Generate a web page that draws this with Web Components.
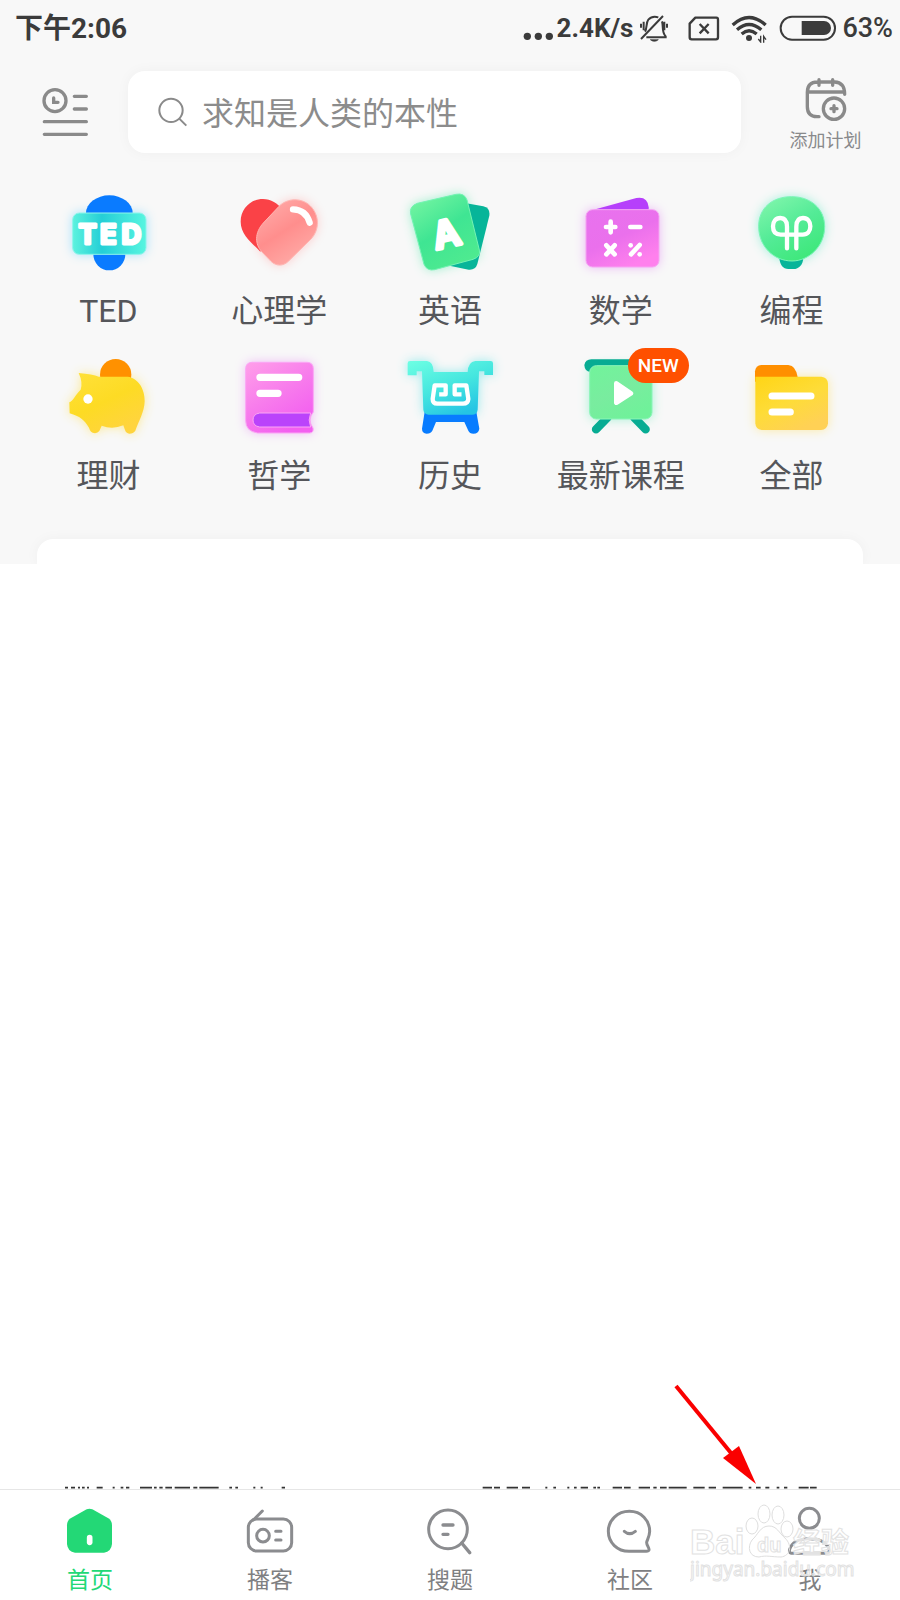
<!DOCTYPE html>
<html lang="zh-CN">
<head>
<meta charset="utf-8">
<meta name="viewport" content="width=device-width, initial-scale=1">
<title>首页</title>
<style>
html,body{margin:0;background:#fff}
body{font-family:Roboto,"Noto Sans CJK SC",sans-serif;color:#55565a}
</style>
</head>
<body>
<home-page></home-page>
<script>
const define = (name, html, setup) => {
  const t = document.createElement('template');
  t.innerHTML = '<style>*{box-sizing:border-box}svg{display:block;flex:none}button{font:inherit;color:inherit;background:none;border:0;padding:0;cursor:pointer}a{color:inherit;text-decoration:none}</style>' + html;
  customElements.define(name, class extends HTMLElement {
    constructor() {
      super();
      this.attachShadow({ mode: 'open' }).append(t.content.cloneNode(true));
    }
    connectedCallback() { if (setup) setup(this, this.shadowRoot); }
  });
};

/* Icon art for the course categories; each entry is [viewBox, markup]. */
const ART = {
ted: ['26 8 300 300', `
  <rect x="69" y="97" width="222" height="125" rx="20" fill="#4fc8ff" filter="url(#s)"/>
  <path d="M110 98A70 53 0 0 1 250 98V110H110Z" fill="#0a7bff"/><path d="M132 215H228V222A48 48 0 0 1 132 222Z" fill="#0a7bff"/>
  <rect x="70" y="98" width="220" height="124" rx="20" fill="url(#cy)" stroke="#8ff5ea" stroke-width="3"/>
  <text x="115 177 246" y="192" text-anchor="middle" font-family="Inter" font-size="82" font-weight="700" fill="#fff" stroke="#fff" stroke-width="9" stroke-linejoin="round">TED</text>`],
heart: ['538 8 300 300', `
  <path d="M641 128L688 78C714 52 757 52 782 77C810 105 810 148 784 176L716 243C700 258 680 258 664 243L636 214C616 192 614 158 641 128Z" fill="#ff9b9b" filter="url(#s)"/>
  <path d="M640 56C603 56 573 86 573 124C573 165 610 190 632 214L700 90C684 68 664 56 640 56Z" fill="#fa4247"/>
  <path d="M641 128L688 78C714 52 757 52 782 77C810 105 810 148 784 176L716 243C700 258 680 258 664 243L636 214C616 192 614 158 641 128Z" fill="url(#rd)" stroke="#ffb6b3" stroke-width="3"/>
  <path d="M730 87Q769 88 780 127" fill="none" stroke="#fff" stroke-width="19" stroke-linecap="round"/>`],
english: ['30 8 300 300', `
  <path d="M82 69L198 42Q223 37 231 59L268 209Q273 229 249 237L134 268Q111 273 102 252L62 101Q57 78 82 69Z" fill="#41e6a0" filter="url(#s)"/>
  <path d="M220 67L280 78Q301 83 298 106L262 251Q256 270 236 268L150 250Z" fill="#07b599"/>
  <path d="M82 69L198 42Q223 37 231 59L268 209Q273 229 249 237L134 268Q111 273 102 252L62 101Q57 78 82 69Z" fill="url(#gr)" stroke="#73f3b3" stroke-width="3"/>
  <text x="0" y="0" transform="translate(178 199) rotate(-13)" text-anchor="middle" font-family="Inter" font-size="112" font-weight="600" fill="#fff" stroke="#fff" stroke-width="11" stroke-linejoin="round">A</text>`],
math: ['540 8 300 300', `
  <rect x="584" y="88" width="220" height="172" rx="20" fill="#d96cf0" filter="url(#s)"/>
  <path d="M608 88L736 53Q770 47 773 81V100H608Z" fill="#b63ffb"/>
  <rect x="585" y="88" width="219" height="172" rx="20" fill="url(#pk)" stroke="#f6a5f3" stroke-width="3"/>
  <path d="M645 140H673M659 124V156M718 140H748M646 195L671 222M671 195L646 222M720 222L746 194" fill="none" stroke="#fff" stroke-width="14" stroke-linecap="round"/>
  <circle cx="719" cy="195" r="7" fill="#fff"/><circle cx="746" cy="222" r="7" fill="#fff"/>`],
code: ['125 8 300 300', `
  <path d="M274 49C330 49 373 84 373 139C373 198 325 242 275 242C220 242 175 198 175 138C175 84 215 49 274 49Z" fill="#3ee6b9" filter="url(#s)"/>
  <path d="M237 232H309C308 253 296 266 279 266H264C248 266 238 252 237 232Z" fill="#07b599"/>
  <path d="M274 49C330 49 373 84 373 139C373 198 325 242 275 242C220 242 175 198 175 138C175 84 215 49 274 49Z" fill="url(#gc)" stroke="#7bf5b8" stroke-width="3"/>
  <path d="M260 204V139C260 121 252 113 240 113C226 113 218 123 218 138C218 154 226 163 241 163H307C322 163 330 153 330 138C330 123 322 113 308 113C295 113 288 122 288 139V204" fill="none" stroke="#fff" stroke-width="13" stroke-linecap="round"/>`],
money: ['26 24 300 300', `
  <path d="M88 99Q130 103 148 110H235C267 114 287 148 286 184C285 216 269 242 258 272Q252 281 240 281Q230 280 227 270L222 256Q189 270 157 257L150 273Q144 281 133 279Q123 277 119 263C105 240 92 229 61 220L60 187C70 184 78 165 94 149Q101 127 88 99Z" fill="#fedb35" filter="url(#s)"/>
  <circle cx="199" cy="104" r="47" fill="#ff9100"/>
  <path d="M88 99Q130 103 148 110H235C267 114 287 148 286 184C285 216 269 242 258 272Q252 281 240 281Q230 280 227 270L222 256Q189 270 157 257L150 273Q144 281 133 279Q123 277 119 263C105 240 92 229 61 220L60 187C70 184 78 165 94 149Q101 127 88 99Z" fill="url(#ye)"/>
  <circle cx="116" cy="177" r="14" fill="#fff"/>`],
book: ['538 24 300 300', `
  <path d="M608 67H772Q791 67 791 87V216Q772 239 790 264Q793 278 780 279H624Q588 274 588 242V87Q588 67 608 67Z" fill="#e27bf2" filter="url(#s)"/>
  <path d="M608 67H772Q791 67 791 87V216Q772 239 790 264Q793 278 780 279H624Q588 274 588 242V87Q588 67 608 67Z" fill="url(#bk)" stroke="#fba6f5" stroke-width="3"/>
  <path d="M630 219H783Q774 240 783 261H630Q610 258 610 240Q610 222 630 219Z" fill="#ba43fb" stroke="#fba6f5" stroke-width="3"/>
  <path d="M631 112H747M631 160H685" stroke="#fff" stroke-width="22" stroke-linecap="round"/>`],
history: ['30 24 300 300', `
  <path d="M60 63H111Q130 65 131 96H233Q234 66 256 63H302Q309 63 309 70V105H283V94H267L263 209Q261 224 246 224H116Q102 223 100 209L96 94H80V106H53V70Q53 63 60 63Z" fill="#39dce0" filter="url(#s)"/>
  <path d="M104 215H259L268 266Q266 281 250 281Q239 281 235 272L223 246H138L127 272Q122 281 110 281Q96 280 96 266Z" fill="#087cff"/>
  <path d="M60 63H111Q130 65 131 96H233Q234 66 256 63H302Q309 63 309 70V105H283V94H267L263 209Q261 224 246 224H116Q102 223 100 209L96 94H80V106H53V70Q53 63 60 63Z" fill="url(#hi)"/>
  <path d="M154 163H167V136H134L128 177Q128 191 142 191H219Q234 191 235 177L229 136H194V163H208" fill="none" stroke="#fff" stroke-width="13" stroke-linejoin="round" stroke-linecap="square"/>`],
latest: ['542 24 300 300', `
  <rect x="597" y="76" width="189" height="162" rx="20" fill="#51e8ae" filter="url(#s)"/>
  <path d="M603 58H770V96H600Q583 94 582 75Q585 59 603 58Z" fill="#07ac93"/>
  <path d="M652 232L617 268M731 232L766 268" stroke="#07ac93" stroke-width="25" stroke-linecap="round"/>
  <rect x="598" y="77" width="187" height="160" rx="20" fill="url(#lt)" stroke="#8cf5ba" stroke-width="3"/>
  <path d="M678 130L722 160L678 188Z" fill="#fff" stroke="#fff" stroke-width="14" stroke-linejoin="round"/>`],
all: ['125 504 300 300', `
  <path d="M165 590H363Q382 592 383 611V730Q381 749 362 750H184Q166 748 165 730Z" fill="#fedb4a" filter="url(#s)"/>
  <path d="M164 605V574Q166 556 183 555H264Q287 557 292 592V605Z" fill="#ff8f00"/>
  <path d="M165 590H363Q382 592 383 611V730Q381 749 362 750H184Q166 748 165 730Z" fill="url(#ya)"/>
  <path d="M215 648H332M215 696H270" stroke="#fff" stroke-width="21" stroke-linecap="round"/>`]
};
const grad = (id, a, b, c) => `<linearGradient id="${id}" x1="0" y1="0" x2=".6" y2="1"><stop offset="0" stop-color="${a}"/><stop offset=".55" stop-color="${b}"/><stop offset="1" stop-color="${c}"/></linearGradient>`;
const DEFS = `<defs><filter id="s" x="-30%" y="-30%" width="160%" height="160%"><feGaussianBlur stdDeviation="16"/><feComponentTransfer><feFuncA type="linear" slope=".5"/></feComponentTransfer></filter>
${grad('rd','#ffb0ae','#ff8e8d','#ffaaa6')}${grad('gr','#7cf7a4','#3fe593','#4eea90')}${grad('pk','#e872ee','#ea70ec','#ff80ed')}${grad('gc','#86f7ae','#54eb97','#3fe87c')}${grad('ye','#ffe13a','#fddb24','#ffd43e')}${grad('bk','#ff9fe9','#f77bec','#f35ff0')}${grad('hi','#6dffe3','#45e6df','#25c5e4')}${grad('lt','#71f49b','#79ec9f','#70f19a')}${grad('ya','#ffd515','#fedc38','#ffd155')}
<linearGradient id="cy"><stop offset="0" stop-color="#5cf2de"/><stop offset=".4" stop-color="#25cfd6"/><stop offset="1" stop-color="#57f5e0"/></linearGradient></defs>`;

define('status-bar', `
<style>
:host{display:flex;align-items:center;height:56px;padding:0 7px 0 15px;color:#3b3b3b;font-size:28px;line-height:32px}
.time{font-weight:700;margin-right:auto;padding-top:2px}
.speed{font-weight:700;font-size:26px;margin:0 6px 0 3px}
.sim{margin-left:19px}.wifi,.bat{margin-left:11px}
.pct{font-weight:500;font-size:27px;margin-left:5px}
</style>
<span class="time">下午2:06</span>
<svg width="31" height="30" viewBox="220 36 93 90" fill="#3b3b3b"><circle cx="233" cy="106" r="11"/><circle cx="266" cy="106" r="11"/><circle cx="299" cy="106" r="11"/></svg>
<span class="speed">2.4K/s</span>
<svg width="30" height="30" viewBox="570 36 90 90" fill="none" stroke="#3b3b3b" stroke-width="6"><path d="M642 45L576 114M588 92C595 82 590 66 598 56Q610 43 628 49M639 61C644 77 637 92 650 106V109H592M576 68V80M584 62V88M654 68V80M646 62V88"/><path d="M604 116H628Q616 126 604 116Z" fill="#3b3b3b" stroke-width="2"/></svg>
<svg class="sim" width="32" height="30" viewBox="717 36 96 90" fill="none" stroke="#3b3b3b" stroke-width="7"><path d="M739 50H802Q807 50 807 56V109Q807 115 801 115H728Q722 115 722 109V68Z" stroke-linejoin="round"/><path d="M752 69L779 97M779 69L752 97"/></svg>
<svg class="wifi" width="37" height="30" viewBox="846 36 111 90" fill="none" stroke="#3b3b3b" stroke-width="10"><path d="M851 72Q900 27 950 72M864 86Q900 55 937 86M878 99Q900 80 923 99"/><circle cx="900" cy="111" r="9" fill="#3b3b3b" stroke="none"/><path d="M935 104V123L928 114M944 125V106L951 116" stroke-width="4"/></svg>
<svg class="bat" width="58" height="30" viewBox="990 36 174 90"><rect x="995" y="47" width="163" height="69" rx="34" fill="none" stroke="#3b3b3b" stroke-width="6"/><path d="M1058 60H1125A21 21 0 0 1 1125 102H1058Z" fill="#3b3b3b"/></svg>
<span class="pct">63%</span>`);

define('search-header', `
<style>
:host{display:grid;grid-template-columns:128px 1fr 159px;align-items:center;margin-top:15px;color:#898a8c}
.menu{justify-self:center;padding-left:2px}
.box{display:flex;align-items:center;gap:14px;height:82px;padding:0 30px;background:#fff;border-radius:17px;box-shadow:0 0 14px rgba(0,0,0,.04)}
input{flex:1;min-width:0;border:0;outline:0;background:none;padding:4px 0 0;font:inherit;font-size:32px;line-height:48px;color:#888}
input::placeholder{color:#8c8c8c;opacity:1}
.plan{display:flex;flex-direction:column;align-items:center;gap:6px;padding:4px 0 0 10px;font-size:18px;line-height:24px}
</style>
<button class="menu" aria-label="学习记录"><svg width="50" height="55" viewBox="120 255 150 165" fill="none" stroke="#8a8a8a" stroke-width="10" stroke-linecap="round"><circle cx="165" cy="302" r="33"/><path d="M161 294V307H174M223 289H259M223 327H259M133 365H259M133 403H259"/></svg></button>
<label class="box">
<svg width="30" height="30" viewBox="475 286 90 90" fill="none" stroke="#8a8a8a" stroke-width="6"><circle cx="514" cy="326" r="35"/><path d="M538 350L560 372"/></svg>
<input type="text" placeholder="求知是人类的本性" aria-label="搜索">
</label>
<button class="plan"><svg width="48" height="48" viewBox="1056 225 144 144" fill="none" stroke="#8a8a8a" stroke-width="10" stroke-linecap="round"><path d="M1107 350H1101Q1072 349 1072 320V276Q1073 246 1102 246H1154Q1184 247 1184 283M1072 276H1183M1107 239V256M1148 239V256"/><circle cx="1152" cy="326" r="32"/><path d="M1152 317V335M1143 326H1161"/></svg>添加计划</button>`);

define('category-item', `
<style>
:host{display:block;position:relative}
a{display:flex;flex-direction:column;align-items:center;gap:8px;font-size:32px;line-height:40px;white-space:nowrap}
.badge{position:absolute;left:calc(50% + 7px);top:0;width:61px;height:35px;border-radius:18px;background:#ff5000;color:#fff;font-size:19px;line-height:36px;font-weight:500;text-align:center}
.badge[hidden]{display:none}
</style>
<a href="#"><span class="icon"></span><slot></slot></a><span class="badge" hidden></span>`, (el, root) => {
  const [box, art] = ART[el.getAttribute('icon')];
  root.querySelector('.icon').innerHTML = `<svg width="100" height="100" viewBox="${box}" overflow="visible" aria-hidden="true">${DEFS}${art}</svg>`;
  const b = root.querySelector('.badge');
  if (el.hasAttribute('badge')) { b.textContent = el.getAttribute('badge'); b.hidden = false; }
});

define('category-grid', `
<style>
:host{display:grid;grid-template-columns:repeat(5,1fr);row-gap:17px;padding:30px 23px 0}
</style><slot></slot>`);

define('tab-item', `
<style>
:host{display:block;flex:1;color:#7f8082}
:host([active]){color:#23d876}
a{display:flex;flex-direction:column;align-items:center;gap:8px;font-size:23px;line-height:32px}
</style>
<a href="#"><slot name="icon"></slot><slot></slot></a>`);

define('tab-bar', `
<style>
:host{display:flex;padding:15px 0 3px;border-top:1px solid #e6e6e6;background:#fff}
svg{width:60px;height:52px;fill:none;stroke:#8b8c8f;stroke-width:9;stroke-linecap:round;stroke-linejoin:round}
</style>
<tab-item active><svg slot="icon" viewBox="180 105 180 156"><path d="M260 118Q268 114 277 118L325 145Q336 152 336 166V222Q334 245 312 248H225Q203 245 201 222V166Q201 152 212 145Z" fill="#23d876" stroke="none"/><path d="M269 203V217" stroke="#fff" stroke-width="17"/></svg>首页</tab-item>
<tab-item><svg slot="icon" viewBox="720 105 180 156"><rect x="745" y="147" width="130" height="96" rx="25"/><path d="M760 150L787 123M827 184H843M827 210H843"/><circle cx="789" cy="197" r="19"/></svg>播客</tab-item>
<tab-item><svg slot="icon" viewBox="30 75 180 156"><circle cx="114" cy="148" r="58"/><path d="M155 189L179 218M99 135H129M99 163H114" stroke-width="10"/></svg>搜题</tab-item>
<tab-item><svg slot="icon" viewBox="450 105 180 156"><path d="M538 124C574 124 599 151 599 184C599 198 591 211 590 217C589 225 599 235 597 240Q596 244 589 244H537C502 244 475 218 475 184C475 150 503 124 538 124ZM523 184Q539 198 556 184"/></svg>社区</tab-item>
<tab-item><svg slot="icon" viewBox="990 105 180 156"><circle cx="1078" cy="145" r="30"/><path d="M1024 250Q1016 248 1019 238C1026 215 1046 206 1078 206C1110 206 1130 215 1137 238Q1140 248 1132 250Z"/></svg>我</tab-item>`);

define('pointer-arrow', `
<style>:host{display:block}</style>
<svg width="84" height="104" viewBox="0 0 84 104" fill="#fa0000"><path d="M3 3L58 70" stroke="#fa0000" stroke-width="4"/><path d="M66 63L83 101L50 75Z"/></svg>`);

define('water-mark', `
<style>
:host{display:block;width:170px;height:82px;pointer-events:none}
text{fill:#fff;fill-opacity:.4;stroke:#e2e2e2;stroke-width:1}
.paw{fill:none;stroke:#dedede;stroke-width:1}
.solid{fill-opacity:.75}
</style>
<svg width="170" height="82" viewBox="0 0 170 82">
<g class="paw"><ellipse cx="62" cy="22" rx="6" ry="8"/><ellipse cx="74" cy="10" rx="6" ry="9"/><ellipse cx="88" cy="11" rx="6" ry="9"/><ellipse cx="97" cy="25" rx="6" ry="8"/><path d="M79 22C87 22 89 29 95 34C103 42 100 52 91 53C82 53 76 51 69 53C59 53 57 43 62 36C68 31 70 22 79 22Z"/></g>
<text x="0" y="50" font-family="Liberation Sans" font-weight="700" font-size="35">Bai</text>
<text x="67" y="48" font-family="Liberation Sans" font-weight="700" font-size="20">du</text>
<text class="solid" x="103" y="49" font-family="Noto Sans CJK SC" font-weight="700" font-size="28">经验</text>
<text x="0" y="72" font-family="Noto Sans" font-size="19">jingyan.baidu.com</text>
</svg>`);

define('home-page', `
<style>
:host{display:flex;flex-direction:column;min-height:100vh;position:relative;overflow:hidden}
.top{background:#f8f8f8;overflow:hidden}
.card{height:25px;margin:43px 37px 0;background:#fff;border-radius:16px 16px 0 0;box-shadow:0 0 14px rgba(0,0,0,.04)}
main{flex:1;display:flex;flex-direction:column;justify-content:flex-end}
main svg{width:100%;height:3px}
pointer-arrow{position:absolute;right:143px;bottom:113px}
water-mark{position:absolute;right:40px;bottom:14px}
</style>
<div class="top">
<status-bar></status-bar>
<search-header></search-header>
<category-grid>
<category-item icon="ted">TED</category-item>
<category-item icon="heart">心理学</category-item>
<category-item icon="english">英语</category-item>
<category-item icon="math">数学</category-item>
<category-item icon="code">编程</category-item>
<category-item icon="money">理财</category-item>
<category-item icon="book">哲学</category-item>
<category-item icon="history">历史</category-item>
<category-item icon="latest" badge="NEW">最新课程</category-item>
<category-item icon="all">全部</category-item>
</category-grid>
<div class="card"></div>
</div>
<main>
<svg viewBox="0 0 2700 9" aria-hidden="true"><path d="M195 5h9M213 5h12M234 5h6M246 5h8M261 5h6M290 5h18M338 5h6M362 5h8M378 5h10M420 5h36M462 5h8M478 5h10M496 5h20M524 5h46M580 5h12M598 5h58M688 5h8M706 5h8M760 5h6M782 5h6M845 5h10M1448 5h28M1482 5h18M1520 5h34M1566 5h24M1636 5h6M1660 5h8M1702 5h6M1722 5h8M1742 5h22M1780 5h8M1792 5h8M1838 5h28M1872 5h20M1916 5h34M1960 5h10M1980 5h20M2006 5h54M2080 5h34M2126 5h22M2168 5h60M2246 5h8M2268 5h14M2296 5h12M2330 5h8M2352 5h10M2396 5h30M2430 5h20" stroke="#333" stroke-width="5"/></svg>
</main>
<tab-bar></tab-bar>
<pointer-arrow></pointer-arrow>
<water-mark></water-mark>`);
</script>
</body>
</html>
